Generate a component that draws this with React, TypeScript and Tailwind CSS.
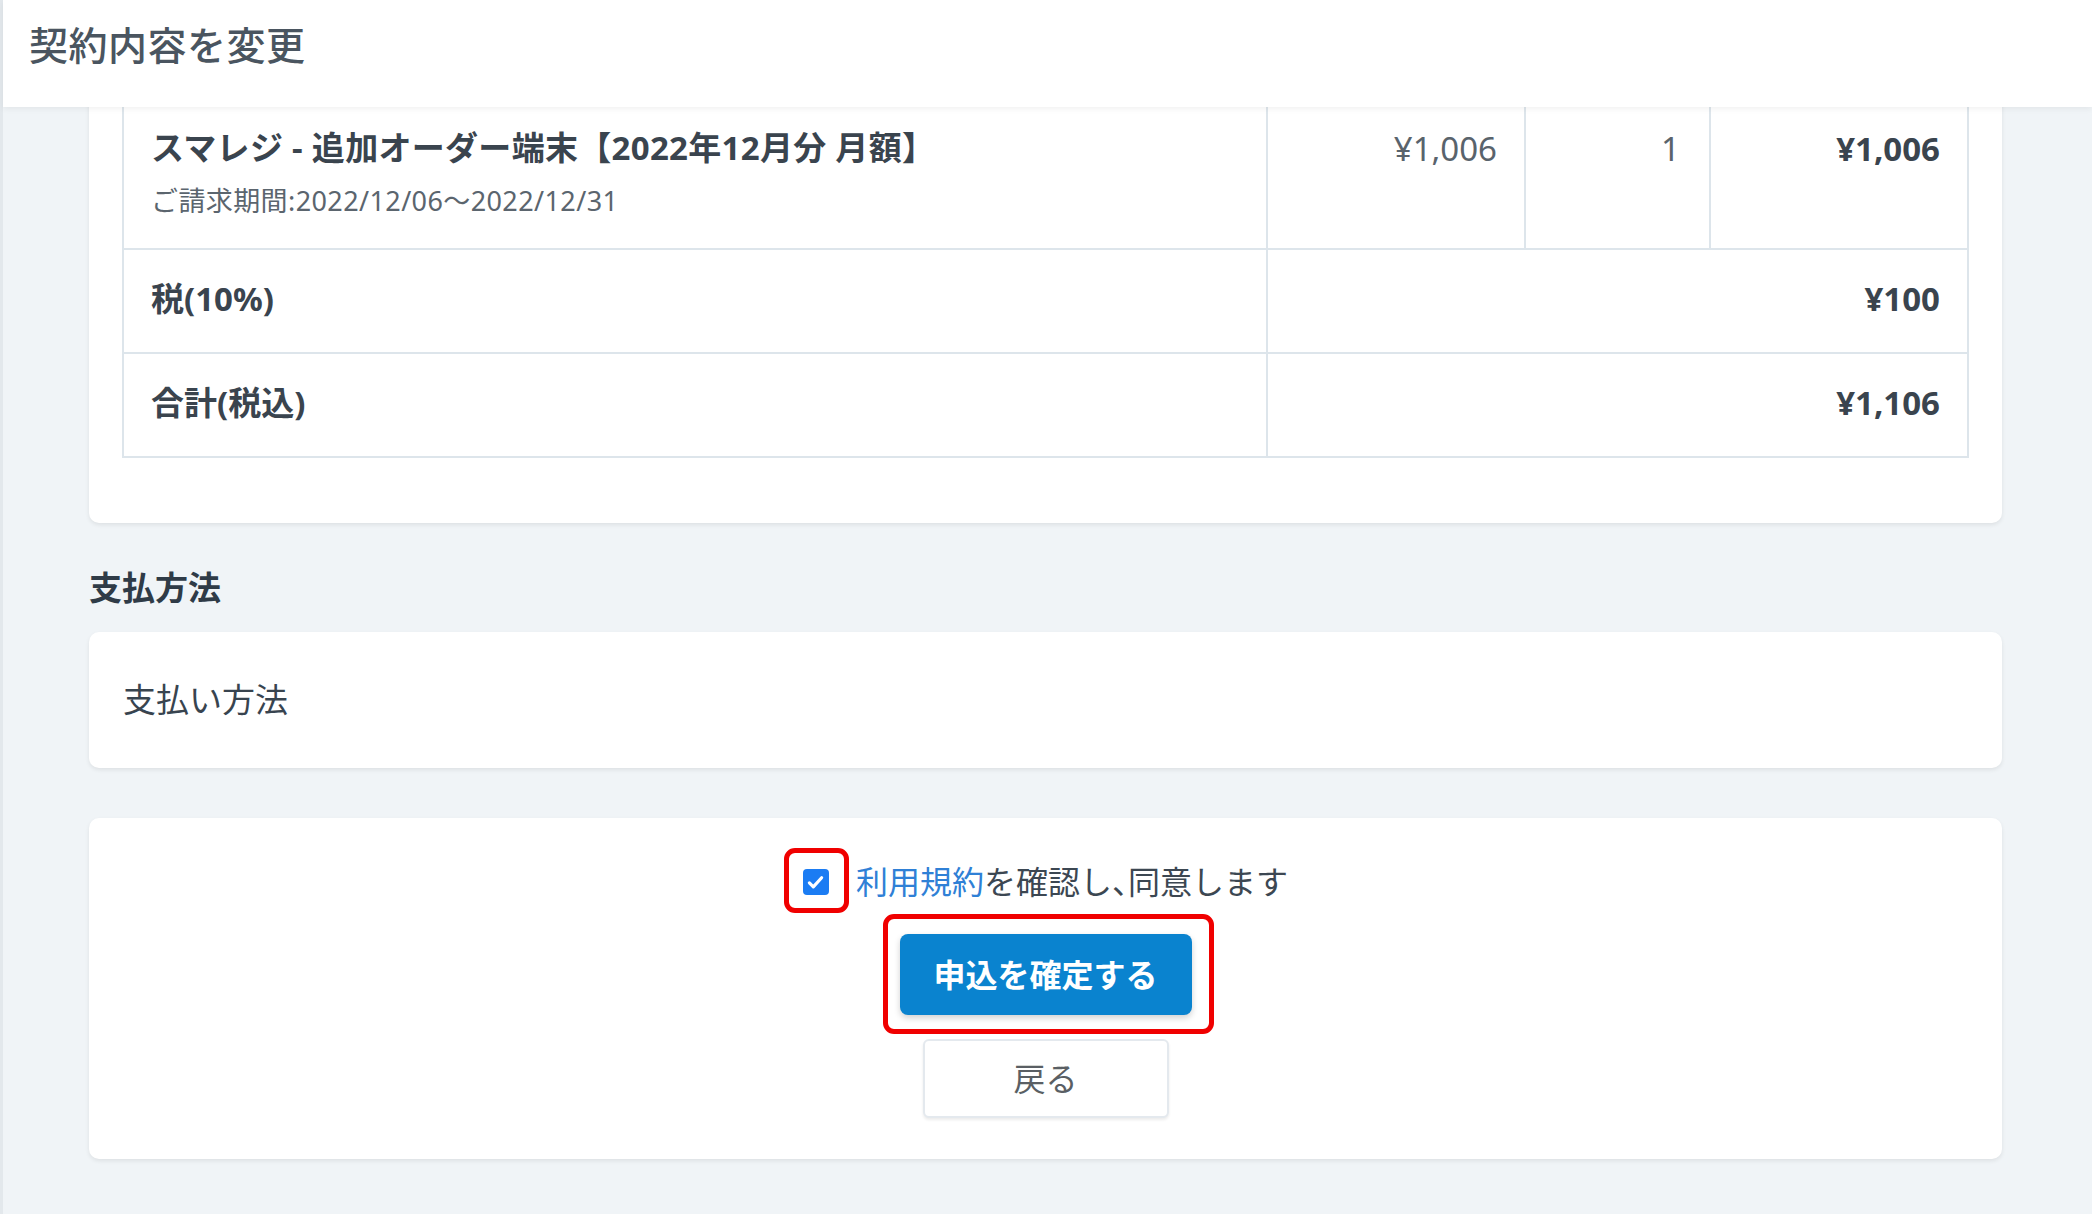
import React, { useState } from 'react';

const FONT = '"Noto Sans", "Noto Sans CJK JP", sans-serif';

interface LineItem {
  name: string;
  period: string;
  unitPrice: string;
  quantity: number;
  amount: string;
}

const item: LineItem = {
  name: 'スマレジ - 追加オーダー端末【2022年12月分 月額】',
  period: 'ご請求期間:2022/12/06〜2022/12/31',
  unitPrice: '¥1,006',
  quantity: 1,
  amount: '¥1,006',
};

const CheckIcon = () => (
  <svg viewBox="0 0 24 24" className="w-[21px] h-[21px]" fill="none">
    <path d="M5 12.5l4.5 4.5L19 6.5" stroke="white" strokeWidth="3.6" strokeLinecap="round" strokeLinejoin="round" />
  </svg>
);

export default function App() {
  const [agreed, setAgreed] = useState(true);

  return (
    <div className="min-h-[1214px] bg-[#f0f4f7] border-l-[3px] border-[#e3e8ec]" style={{ fontFamily: FONT }}>
      {/* ヘッダー */}
      <div className="relative z-10 h-[107px] bg-white shadow-[0_2px_6px_rgba(0,0,0,0.06)] flex items-center pl-[26px] pb-[16px]">
        <h1 className="text-[39px] font-medium text-[#4a5560] tracking-[0.5px]">契約内容を変更</h1>
      </div>

      <div className="-mt-[42px] pl-[86px] pr-[90px] pb-[55px]">
        {/* 明細カード */}
        <div className="bg-white rounded-[10px] shadow-[0_2px_4px_rgba(0,0,0,0.08)] pt-[33px] px-[33px] pb-[65px]">
          <table className="w-full border-collapse text-[33px] text-[#3a444e]">
            <colgroup>
              <col className="w-[1144px]" />
              <col className="w-[258px]" />
              <col className="w-[185px]" />
              <col className="w-[258px]" />
            </colgroup>
            <tbody>
              <tr>
                <td className="border-2 border-[#dde5eb] px-[27px] pt-[24px] pb-[28px] align-top">
                  <div className="font-bold leading-[48px] tracking-[0.3px]">{item.name}</div>
                  <div className="mt-[9px] text-[27px] leading-[39px] text-[#5b656e] tracking-[0.4px]">{item.period}</div>
                </td>
                <td className="border-2 border-[#dde5eb] px-[27px] pt-[25px] align-top text-right leading-[48px] text-[#59636c]">
                  {item.unitPrice}
                </td>
                <td className="border-2 border-[#dde5eb] px-[29px] pt-[25px] align-top text-right leading-[48px] text-[#59636c]">
                  {item.quantity}
                </td>
                <td className="border-2 border-[#dde5eb] px-[27px] pt-[25px] align-top text-right leading-[48px] font-bold">
                  {item.amount}
                </td>
              </tr>
              <tr>
                <td className="border-2 border-[#dde5eb] px-[27px] pt-[25px] pb-[29px] leading-[48px] font-bold">税(10%)</td>
                <td colSpan={3} className="border-2 border-[#dde5eb] px-[27px] pt-[25px] pb-[29px] leading-[48px] font-bold text-right">
                  ¥100
                </td>
              </tr>
              <tr>
                <td className="border-2 border-[#dde5eb] px-[27px] pt-[25px] pb-[29px] leading-[48px] font-bold">合計(税込)</td>
                <td colSpan={3} className="border-2 border-[#dde5eb] px-[27px] pt-[25px] pb-[29px] leading-[48px] font-bold text-right">
                  ¥1,106
                </td>
              </tr>
            </tbody>
          </table>
        </div>

        {/* 支払方法 */}
        <h2 className="mt-[41px] mb-[20px] text-[33px] leading-[48px] font-bold text-[#2f3b47]">支払方法</h2>
        <div className="bg-white rounded-[10px] shadow-[0_2px_4px_rgba(0,0,0,0.08)] px-[34px] py-[44px]">
          <div className="text-[33px] leading-[48px] text-[#38444f]">支払い方法</div>
        </div>

        {/* 同意・申込 */}
        <div className="mt-[50px] bg-white rounded-[10px] shadow-[0_2px_4px_rgba(0,0,0,0.08)] pt-[40px] pb-[41px] flex flex-col items-center">
          <div className="flex items-center h-[48px] text-[32px] text-[#3c4752]">
            <button
              onClick={() => setAgreed(a => !a)}
              className="relative w-[26px] h-[26px] mr-[27px]"
            >
              <span className={`absolute inset-0 rounded-[4px] flex items-center justify-center ${agreed ? 'bg-[#1b7cf3]' : 'bg-white border-2 border-gray-400'}`}>
                {agreed && <CheckIcon />}
              </span>
              {/* 注釈の赤枠 */}
              <span className="absolute -left-[19px] -top-[21px] w-[65px] h-[65px] border-[5px] border-[#f00000] rounded-[11px]" />
            </button>
            <span className="text-[#2f80d6]">利用規約</span>
            <span className="[font-feature-settings:'halt']">を確認し、</span>
            <span>同意します</span>
          </div>

          <div className="relative mt-[28px]">
            <button className="w-[292px] h-[81px] rounded-[8px] bg-[#0a83cf] text-white text-[32px] font-bold shadow-[0_3px_6px_rgba(0,0,0,0.18)]">
              申込を確定する
            </button>
            <span className="absolute -left-[17px] -right-[22px] -top-[20px] -bottom-[19px] border-[5px] border-[#f00000] rounded-[11px] pointer-events-none" />
          </div>

          <button className="mt-[24px] w-[246px] h-[79px] rounded-[6px] bg-white border-2 border-[#e4e9ee] shadow-[0_2px_3px_rgba(0,0,0,0.08)] text-[32px] text-[#5a5f64]">
            戻る
          </button>
        </div>
      </div>
    </div>
  );
}
